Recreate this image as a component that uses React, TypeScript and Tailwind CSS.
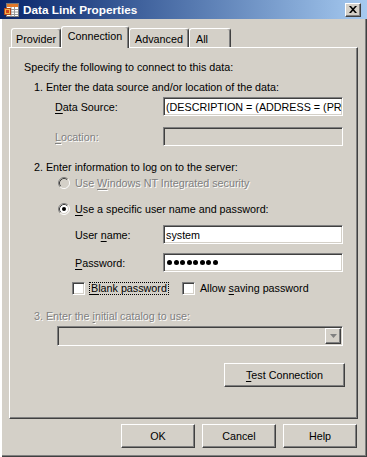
import { ReactNode } from "react";
import { clsx } from "clsx";

const raised =
  "border border-t-white border-l-white border-r-[#404040] border-b-[#404040] shadow-[inset_-1px_-1px_0_#808080]";
const sunken =
  "border border-t-[#808080] border-l-[#808080] border-r-white border-b-white shadow-[inset_1px_1px_0_#404040,inset_-1px_-1px_0_#d4d0c8]";
const disabledText = "text-[#808080] [text-shadow:1px_1px_0_#ffffff]";

const U = ({ children }: { children: ReactNode }) => (
  <span className="underline underline-offset-[2px] decoration-1">{children}</span>
);

const AppIcon = () => (
  <svg width="15" height="14" viewBox="0 0 15 14">
    <rect x="2.5" y="0.5" width="12" height="13" fill="#fff" stroke="#7a7a7a" />
    <rect x="3" y="1" width="11" height="3" fill="#e2782a" />
    <path d="M3 6.5h11M3 9h11M3 11.5h11M7 4v9.5M10.5 4v9.5" stroke="#9a9a9a" />
    <rect x="0.5" y="5.5" width="6" height="6" fill="#f3b24a" stroke="#b8471b" />
    <rect x="2" y="7" width="3" height="3" fill="#d0431b" />
  </svg>
);

const Radio = ({ checked, disabled }: { checked?: boolean; disabled?: boolean }) => (
  <svg width="12" height="12" viewBox="0 0 12 12" className="shrink-0">
    <circle cx="6" cy="6" r="5" fill={disabled ? "#d4d0c8" : "#fff"} />
    <path d="M2.11 9.89A5.5 5.5 0 0 1 9.89 2.11" stroke="#808080" fill="none" />
    <path d="M9.89 2.11A5.5 5.5 0 0 1 2.11 9.89" stroke="#fff" fill="none" />
    <path d="M2.82 9.18A4.5 4.5 0 0 1 9.18 2.82" stroke="#404040" fill="none" />
    <path d="M9.18 2.82A4.5 4.5 0 0 1 2.82 9.18" stroke="#d4d0c8" fill="none" />
    {checked && <circle cx="6" cy="6" r="2" fill="#000" />}
  </svg>
);

const Checkbox = () => <div className={clsx("w-[13px] h-[13px] bg-white shrink-0", sunken)} />;

const Field = ({ disabled, children }: { disabled?: boolean; children?: ReactNode }) => (
  <div
    className={clsx(
      "w-[180px] h-[19px] flex items-center pl-[2px] overflow-hidden whitespace-nowrap",
      sunken,
      disabled ? "bg-[#d4d0c8]" : "bg-white"
    )}
  >
    {children}
  </div>
);

const Button = ({ children, className }: { children: ReactNode; className?: string }) => (
  <div className={clsx("h-[24px] flex items-center justify-center bg-[#d4d0c8]", raised, className)}>
    {children}
  </div>
);

const Tab = ({ label, active, w }: { label: string; active?: boolean; w: string }) => (
  <div
    className={clsx(
      "flex items-center justify-center rounded-t-[3px] border-t border-l border-t-white border-l-white border-r border-r-[#404040] shadow-[inset_-1px_0_0_#808080] bg-[#d4d0c8]",
      w,
      active ? "h-[22px] -mb-[1px] pb-[3px] relative z-10" : "h-[19px] pt-[1px]"
    )}
  >
    {label}
  </div>
);

export default function App() {
  return (
    <div className="w-[367px] h-[457px] bg-[#d4d0c8] flex flex-col text-[10.75px] leading-[14px] text-black [font-family:'Liberation_Sans',Arial,sans-serif] shadow-[inset_2px_0_0_#fff,inset_-1px_-1px_0_#404040,inset_-2px_-2px_0_#808080] overflow-hidden">
      {/* title bar */}
      <div className="h-[19px] shrink-0 flex items-center pl-[4px] pr-[6px] bg-gradient-to-r from-[#0a246a] to-[#a6caf0]">
        <AppIcon />
        <span className="ml-[4px] font-bold text-white text-[11.75px]">Data Link Properties</span>
        <div className={clsx("ml-auto w-[16px] h-[14px] flex items-center justify-center bg-[#d4d0c8]", raised)}>
          <svg width="8" height="7" viewBox="0 0 8 7">
            <path d="M0 0h2l2 2.3L6 0h2L5 3.5 8 7H6L4 4.7 2 7H0l3-3.5z" fill="#000" />
          </svg>
        </div>
      </div>

      {/* tabs */}
      <div className="mt-[7px] ml-[11px] flex items-end h-[21px]">
        <Tab label="Provider" w="w-[50px]" />
        <Tab label="Connection" active w="w-[68px]" />
        <Tab label="Advanced" w="w-[60px]" />
        <Tab label="All" w="w-[42px] justify-start pl-[6px]" />
      </div>

      {/* panel */}
      <div className="ml-[9px] w-[349px] h-[372px] flex flex-col border border-t-white border-l-white border-r-[#404040] border-b-[#404040] shadow-[inset_-1px_-1px_0_#808080]">
        <div className="mt-[12px] h-[14px] pl-[14px]">Specify the following to connect to this data:</div>
        <div className="mt-[6px] h-[14px] pl-[24px]">1. Enter the data source and/or location of the data:</div>

        <div className="mt-[3px] h-[19px] flex items-center pl-[45px]">
          <span className="w-[108px]">
            <U>D</U>ata Source:
          </span>
          <Field>(DESCRIPTION = (ADDRESS = (PROTOCOL = TCP)</Field>
        </div>
        <div className="mt-[11px] h-[19px] flex items-center pl-[45px]">
          <span className={clsx("w-[108px]", disabledText)}>
            <U>L</U>ocation:
          </span>
          <Field disabled />
        </div>

        <div className="mt-[14px] h-[14px] pl-[24px]">2. Enter information to log on to the server:</div>
        <div className="mt-[2px] h-[14px] flex items-center pl-[48px] gap-[5px]">
          <Radio disabled />
          <span className={disabledText}>
            Use <U>W</U>indows NT Integrated security
          </span>
        </div>
        <div className="mt-[12px] h-[14px] flex items-center pl-[48px] gap-[5px]">
          <Radio checked />
          <span>
            <U>U</U>se a specific user name and password:
          </span>
        </div>

        <div className="mt-[9px] h-[19px] flex items-center pl-[65px]">
          <span className="w-[88px]">
            User <U>n</U>ame:
          </span>
          <Field>system</Field>
        </div>
        <div className="mt-[9px] h-[19px] flex items-center pl-[65px]">
          <span className="w-[88px]">
            <U>P</U>assword:
          </span>
          <Field>
            <div className="flex gap-[1.5px] pl-[1px]">
              {Array.from({ length: 8 }).map((_, i) => (
                <span key={i} className="w-[5px] h-[5px] rounded-full bg-black" />
              ))}
            </div>
          </Field>
        </div>

        <div className="mt-[9px] h-[14px] flex items-center pl-[62px]">
          <Checkbox />
          <span className="ml-[4px] h-[13px] flex items-center px-[1px] border border-dotted border-black">
            <U>B</U>lank password
          </span>
          <div className="ml-[13px]">
            <Checkbox />
          </div>
          <span className="ml-[5px]">
            Allow <U>s</U>aving password
          </span>
        </div>

        <div className={clsx("mt-[14px] h-[14px] pl-[24px]", disabledText)}>
          3. Enter the <U>i</U>nitial catalog to use:
        </div>
        <div className="mt-[3px] ml-[47px] w-[286px] h-[20px] flex justify-end items-stretch p-[1px] bg-[#d4d0c8] border border-t-[#808080] border-l-[#808080] border-r-white border-b-white shadow-[inset_1px_1px_0_#404040,inset_-1px_-1px_0_#d4d0c8]">
          <div className={clsx("w-[16px] flex items-center justify-center", raised)}>
            <svg width="7" height="5" viewBox="0 0 7 5">
              <path d="M0 0h7L3.5 4z" fill="#808080" />
            </svg>
          </div>
        </div>

        <div className="mt-[17px] flex justify-end pr-[12px]">
          <Button className="w-[121px] h-[23px]">
            <span>
              <U>T</U>est Connection
            </span>
          </Button>
        </div>
      </div>

      {/* dialog buttons */}
      <div className="mt-[5px] flex justify-end gap-[7px] pr-[10px]">
        <Button className="w-[74px]">OK</Button>
        <Button className="w-[74px]">Cancel</Button>
        <Button className="w-[74px]">Help</Button>
      </div>
    </div>
  );
}
